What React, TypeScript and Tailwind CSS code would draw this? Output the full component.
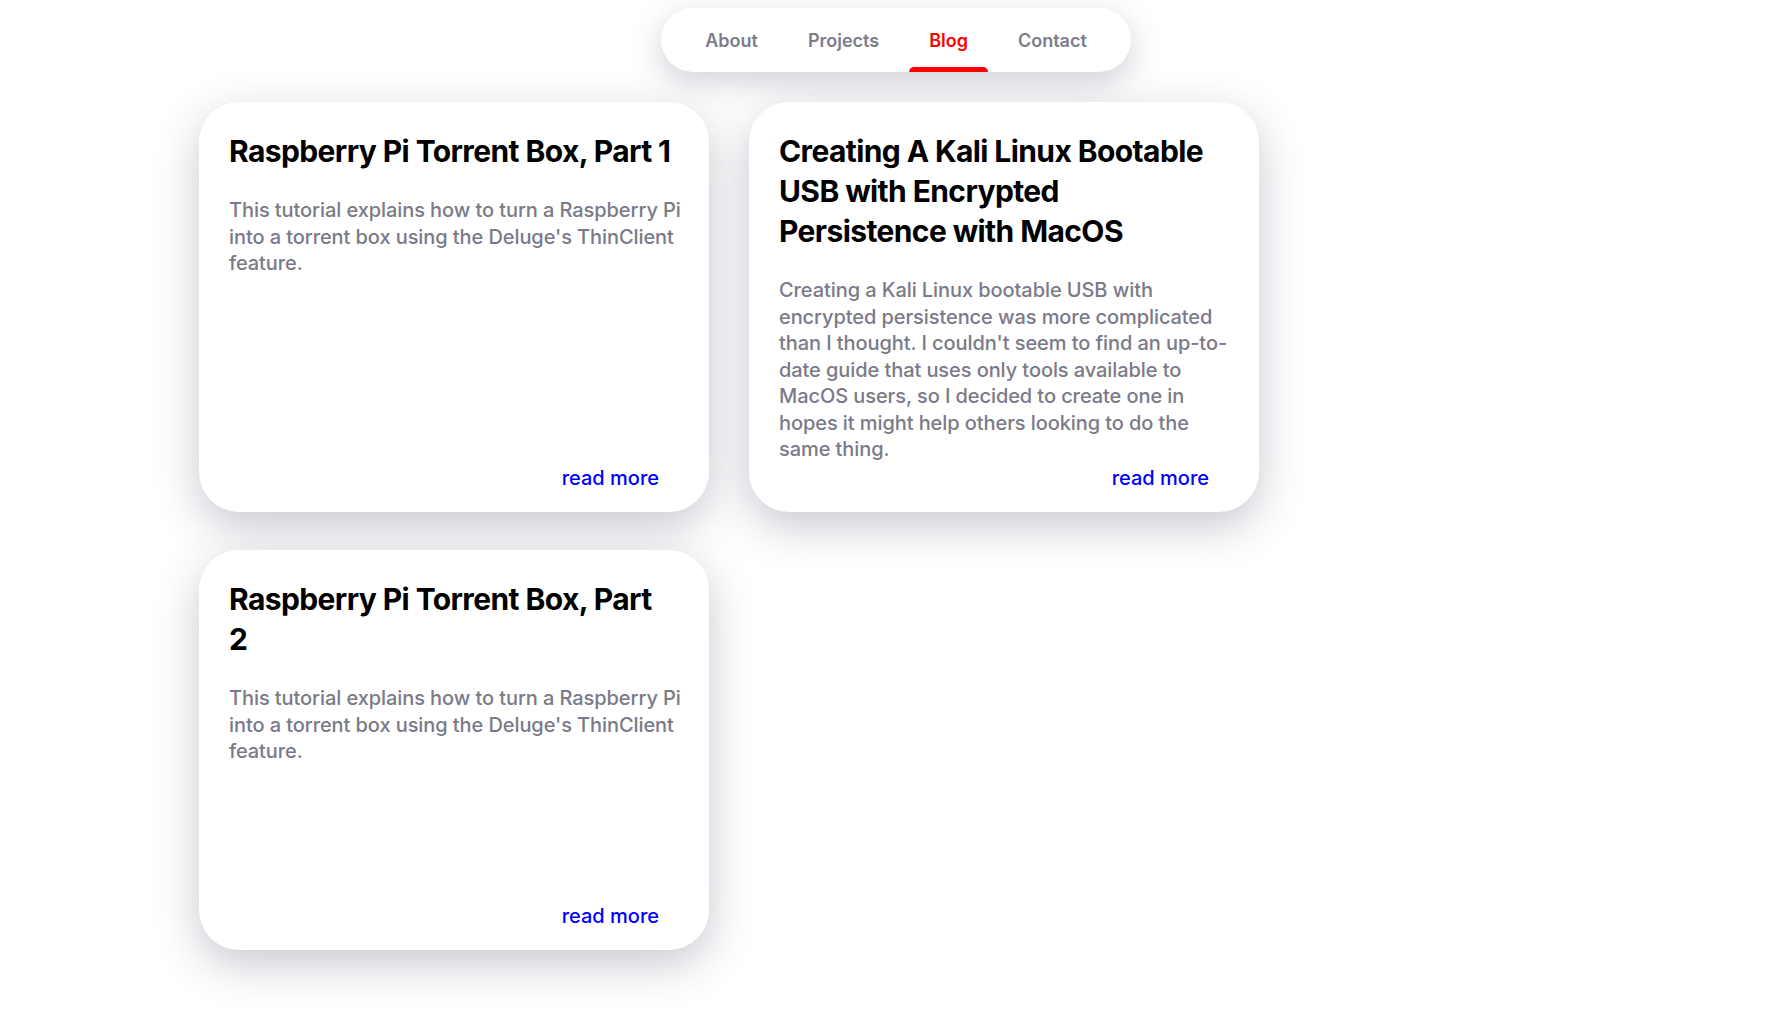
import React from 'react';

const links = ['About', 'Projects', 'Blog', 'Contact'];

// titles keep the line breaks of the original layout
const posts = [
  {
    title: 'Raspberry Pi Torrent Box, Part 1',
    body: "This tutorial explains how to turn a Raspberry Pi into a torrent box using the Deluge's ThinClient feature.",
  },
  {
    title: 'Creating A Kali Linux Bootable\nUSB with Encrypted\nPersistence with MacOS',
    body: "Creating a Kali Linux bootable USB with encrypted persistence was more complicated than I thought. I couldn't seem to find an up-to-date guide that uses only tools available to MacOS users, so I decided to create one in hopes it might help others looking to do the same thing.",
  },
  {
    title: 'Raspberry Pi Torrent Box, Part\n2',
    body: "This tutorial explains how to turn a Raspberry Pi into a torrent box using the Deluge's ThinClient feature.",
  },
];

const NavBar = () => (
  <nav className="flex justify-center pt-2">
    <div className="flex h-16 items-stretch gap-[10px] rounded-full bg-white px-6 shadow-[0_10px_32px_rgba(70,75,100,0.26)]">
      {links.map((label) => {
        const active = label === 'Blog';
        return (
          <a
            key={label}
            href="#"
            className={`relative flex items-center px-5 text-[18px] font-semibold ${
              active ? 'text-[#ff0000]' : 'text-[#7c7c8a]'
            }`}
          >
            {label}
            {active && <span className="absolute bottom-0 left-0 right-0 h-[5px] rounded-t-md bg-[#ff0000]" />}
          </a>
        );
      })}
    </div>
  </nav>
);

const PostCard = ({ title, body }: { title: string; body: string }) => (
  <div className="flex min-h-[400px] flex-col rounded-[40px] bg-white pb-[21px] pl-[30px] pr-[20px] pt-[29px] shadow-[0_14px_44px_rgba(70,75,100,0.3)]">
    <h2 className="whitespace-pre-line text-[30px] font-bold leading-[40px] tracking-[-0.02em] text-black">{title}</h2>
    <p className="mt-[26px] flex-1 text-[20px] font-medium leading-[26.5px] tracking-[-0.004em] text-[#7a7a88]">
      {body}
    </p>
    <a href="#" className="mr-[30px] mt-[2px] self-end text-[20px] font-medium leading-[26.5px] text-[#0000ff]">
      read more
    </a>
  </div>
);

export default function App() {
  return (
    <div className="min-h-screen bg-white font-['Inter','Liberation_Sans',sans-serif]">
      <NavBar />
      <main className="grid grid-cols-[510px_510px] gap-x-10 gap-y-[38px] pl-[199px] pt-[30px] pb-20">
        {posts.map((p) => (
          <PostCard key={p.title} title={p.title} body={p.body} />
        ))}
      </main>
    </div>
  );
}
